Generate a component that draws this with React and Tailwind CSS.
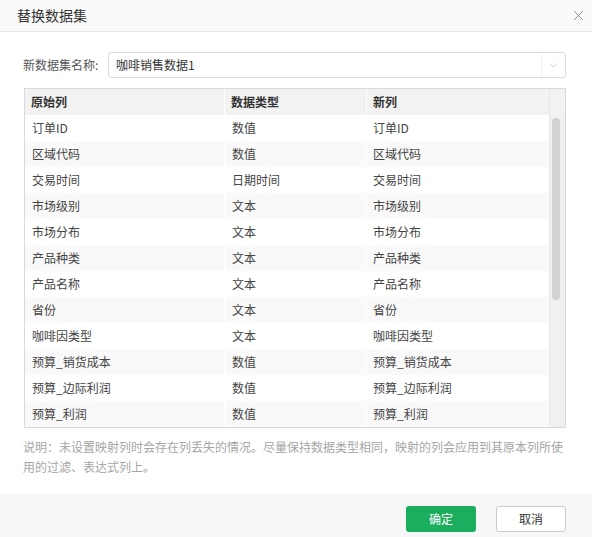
import { FiX, FiChevronDown } from "react-icons/fi";

const rows = [
  ["订单ID", "数值", "订单ID"],
  ["区域代码", "数值", "区域代码"],
  ["交易时间", "日期时间", "交易时间"],
  ["市场级别", "文本", "市场级别"],
  ["市场分布", "文本", "市场分布"],
  ["产品种类", "文本", "产品种类"],
  ["产品名称", "文本", "产品名称"],
  ["省份", "文本", "省份"],
  ["咖啡因类型", "文本", "咖啡因类型"],
  ["预算_销货成本", "数值", "预算_销货成本"],
  ["预算_边际利润", "数值", "预算_边际利润"],
  ["预算_利润", "数值", "预算_利润"],
];

const font = { fontFamily: '"Noto Sans CJK SC", "Noto Sans", sans-serif' };

export default function App() {
  return (
    <div className="w-[592px] h-[537px] bg-white flex flex-col overflow-hidden text-[#333]" style={font}>
      {/* Header */}
      <div className="h-8 shrink-0 flex items-center justify-between pl-[17px] pr-[5px] bg-[#fafafa] border-b border-[#e8e8e8]">
        <span className="text-[14px] text-[#333]">替换数据集</span>
        <FiX className="text-[#777]" size={17} strokeWidth={1.1} />
      </div>

      {/* Body */}
      <div className="flex-1 pt-5 pl-6 pr-[26px]">
        <div className="flex items-center h-[26px]">
          <label className="w-[85px] shrink-0 text-[12px] text-[#555] -ml-px">新数据集名称:</label>
          <div className="flex-1 h-[26px] border border-[#dcdcdc] rounded-[3px] flex items-center">
            <span className="flex-1 pl-[7px] text-[12px] text-[#333]">咖啡销售数据1</span>
            <div className="w-6 h-full border-l border-[#f0f0f0] flex items-center justify-center">
              <FiChevronDown className="text-[#b0b0b0]" size={13} strokeWidth={1.1} />
            </div>
          </div>
        </div>

        <div className="mt-[10px] border border-[#d9d9d9] h-[340px] flex overflow-hidden">
          <div className="flex-1 flex flex-col">
            <div className="flex h-[26px] shrink-0 bg-[#f2f2f2] font-bold text-[12px] text-[#333]">
              <div className="w-[200px] pl-[6px] flex items-center border-r border-white">原始列</div>
              <div className="w-[142px] pl-[6px] flex items-center border-r border-white">数据类型</div>
              <div className="flex-1 pl-[6px] flex items-center">新列</div>
            </div>
            {rows.map((r, i) => (
              <div
                key={i}
                className={`flex h-[26px] shrink-0 text-[12px] text-[#444] ${i % 2 === 1 ? "bg-[#f9f9f9]" : "bg-white"}`}
              >
                <div className="w-[200px] pl-[7px] flex items-center border-r border-white">{r[0]}</div>
                <div className="w-[142px] pl-[7px] flex items-center border-r border-white">{r[1]}</div>
                <div className="flex-1 pl-[6px] flex items-center">{r[2]}</div>
              </div>
            ))}
          </div>
          {/* Scrollbar */}
          <div className="w-4 shrink-0 flex flex-col border-l border-[#e8e8e8]">
            <div className="h-[26px] bg-[#f2f2f2]" />
            <div className="flex-1 bg-[#f0f0f2] pt-[3px] pl-[2px]">
              <div className="w-[8px] h-[182px] rounded bg-[#d2d2d2]" />
            </div>
          </div>
        </div>

        <p className="mt-[9px] text-[12px] leading-5 text-[#a6a6a6] -ml-px">
          说明：未设置映射列时会存在列丢失的情况。尽量保持数据类型相同，映射的列会应用到其原本列所使用的过滤、表达式列上。
        </p>
      </div>

      {/* Footer */}
      <div className="h-[43px] shrink-0 bg-[#f7f7f7] flex items-start justify-end gap-5 pt-3 pr-[26px]">
        <button className="w-[70px] h-[26px] rounded-[3px] bg-[#1bae5e] text-white text-[12px]">确定</button>
        <button className="w-[70px] h-[26px] rounded-[3px] bg-white border border-[#cccccc] text-[#333] text-[12px]">取消</button>
      </div>
    </div>
  );
}
